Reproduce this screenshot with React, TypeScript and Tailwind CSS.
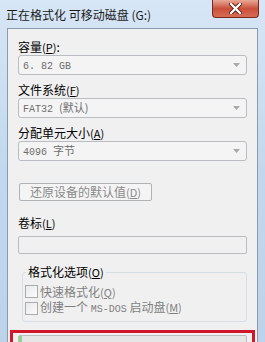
import React from 'react';

const cjk = { fontFamily: '"Noto Sans CJK SC", "Liberation Sans", sans-serif' };
const mono = { fontFamily: '"Liberation Mono", "Noto Sans CJK SC", monospace' };

function Label({ text, acc, colon }: { text: string; acc: string; colon?: boolean }) {
  return (
    <div className="h-[16px] leading-[16px] text-[12px] text-black whitespace-nowrap">
      {text}
      <span className="text-[11px]">
        (<span className="underline">{acc}</span>)
      </span>
      {colon ? ':' : ''}
    </div>
  );
}

function Combo({ children }: { children: React.ReactNode }) {
  return (
    <div className="h-[20px] flex items-center justify-between rounded-[3px] border border-[#b9bcc0] bg-[#f4f4f4] pl-[4px] pr-[6px] text-[#6d6d6d]">
      <div className="text-[11px] leading-[14px] whitespace-nowrap">{children}</div>
      <svg width="7" height="4" viewBox="0 0 7 4">
        <path d="M0 0 L7 0 L3.5 4 Z" fill="#a9a9a9" />
      </svg>
    </div>
  );
}

function Check({ children }: { children: React.ReactNode }) {
  return (
    <div className="h-[17px] flex items-center gap-[2px]">
      <div className="w-[13px] h-[13px] border border-[#a9acaf] bg-gradient-to-br from-[#eaeaea] to-[#fbfbfb]" />
      <div className="text-[12px] leading-[16px] text-[#7f7f7f] whitespace-nowrap">{children}</div>
    </div>
  );
}

export default function App() {
  return (
    <div
      className="w-[265px] h-[342px] overflow-hidden bg-gradient-to-b from-[#d7e6f6] via-[#c2d8ee] to-[#bcd3ea] flex flex-col"
      style={cjk}
    >
      {/* title bar */}
      <div className="h-[28px] flex justify-between pr-[6px] shrink-0">
        <div className="pl-[6px] pt-[7px] text-[12px] leading-[16px] text-[#1b1b1b] whitespace-nowrap">
          正在格式化 可移动磁盘 (G:)
        </div>
        <div className="w-[47px] h-[18px] rounded-b-[4px] border border-t-0 border-[#7a2a1c] bg-gradient-to-b from-[#e8a898] via-[#c9503a] to-[#d76c55] flex items-center justify-center">
          <svg width="13" height="11" viewBox="0 0 13 11">
            <path d="M2 1 L11 10 M11 1 L2 10" stroke="#5a1a10" strokeWidth="4" strokeLinecap="round" />
            <path d="M2 1 L11 10 M11 1 L2 10" stroke="#ffffff" strokeWidth="2.4" strokeLinecap="round" />
          </svg>
        </div>
      </div>

      {/* client area */}
      <div className="mx-[7px] flex-1 border border-b-0 border-[#8a9bb0] bg-[#f0f0f0] px-[10px] pt-[10px] flex flex-col">
        <Label text="容量" acc="P" colon />
        <Combo>
          <span style={mono} className="text-[10px]">6. 82 GB</span>
        </Combo>

        <div className="mt-[7px]">
          <Label text="文件系统" acc="F" />
        </div>
        <Combo>
          <span style={mono} className="text-[10px]">FAT32 </span>
          <span className="text-[11px]">(默认)</span>
        </Combo>

        <div className="mt-[7px]">
          <Label text="分配单元大小" acc="A" />
        </div>
        <Combo>
          <span style={mono} className="text-[10px]">4096 </span>
          <span className="text-[11px]">字节</span>
        </Combo>

        <div className="mt-[22px] ml-[1px] w-[133px] h-[18px] rounded-[2px] border border-[#b0b3b6] bg-[#f4f4f4] flex items-center justify-center text-[12px] leading-[16px] text-[#8a8a8a] whitespace-nowrap">
          还原设备的默认值
          <span className="text-[11px]">
            (<span className="underline">D</span>)
          </span>
        </div>

        <div className="mt-[14px]">
          <Label text="卷标" acc="L" />
        </div>
        <div className="mt-[5px] h-[18px] rounded-[2px] border border-[#b9bcc0] bg-[#f0f0f0]" />

        <fieldset className="mt-[10px] ml-[4px] h-[58px] border border-[#d5dfe5] rounded-[3px] pl-[2px]">
          <legend className="ml-[1px] px-[2px] h-[16px] leading-[16px] text-[12px] text-black whitespace-nowrap">
            格式化选项
            <span className="text-[11px]">
              (<span className="underline">O</span>)
            </span>
          </legend>
          <div className="pt-[3px] flex flex-col">
            <Check>
              快速格式化
              <span className="text-[11px]">
                (<span className="underline">Q</span>)
              </span>
            </Check>
            <Check>
              创建一个 <span style={mono} className="text-[10px]">MS-DOS</span> 启动盘
              <span className="text-[11px]">
                (<span className="underline">M</span>)
              </span>
            </Check>
          </div>
        </fieldset>

        <div className="mt-[8px] -mx-[8px] h-[30px] border-[3px] border-b-0 border-[#d0182a] px-[5px] pt-[2px]">
          <div className="h-[20px] rounded-[2px] border border-[#b9bcc0] bg-[#e6e6e6] flex">
            <div className="w-[3px] h-full bg-[#8fd48a]" />
          </div>
        </div>
      </div>
    </div>
  );
}
